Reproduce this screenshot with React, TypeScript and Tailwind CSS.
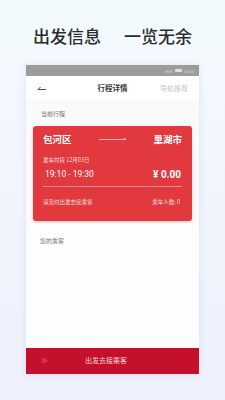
import { ChevronsRight } from "lucide-react";

const font = { fontFamily: '"Noto Sans CJK SC", "Noto Sans", sans-serif' };

export default function App() {
    return (
        <div
            className="w-[225px] h-[400px] bg-gradient-to-b from-[#f3fafd] to-[#eef0fc] flex flex-col items-center overflow-hidden"
            style={font}
        >
            {/* Headline */}
            <div className="mt-[24px] h-[24px] flex items-center text-[17px] font-medium text-[#2b2b2b]">
                出发信息<span className="w-[23px]" />一览无余
            </div>

            {/* Phone screen */}
            <div className="mt-[17px] w-[173px] flex flex-col bg-white shadow-[0_0_6px_rgba(180,190,220,0.35)]">
                {/* Status bar */}
                <div className="h-[11px] bg-[#9c9c9c] flex items-center justify-end pr-[5px] gap-[2px] text-[4px] text-[#d8d8d8]">
                    <span>96%</span>
                    <span className="w-[7px] h-[3px] bg-[#e0e0e0] rounded-[1px]" />
                    <span>18:00</span>
                </div>

                {/* Nav bar */}
                <div className="h-[24px] bg-white flex items-center px-[11px]">
                    <div className="w-[30px]">
                        <svg width="10" height="6" viewBox="0 0 10 6">
                            <path d="M1 4.5h8M1 4.5l2.5-2.5" stroke="#333" strokeWidth="0.9" fill="none" />
                        </svg>
                    </div>
                    <div className="flex-1 text-center text-[7.5px] font-bold text-[#333]">行程详情</div>
                    <div className="w-[30px] text-right text-[7px] text-[#c8c8c8]">导航推荐</div>
                </div>

                {/* Current trip */}
                <div className="bg-[#fafafb] px-[7px] pb-[2px]">
                    <div className="h-[26px] flex items-center pl-[8px] text-[6px] text-[#777]">当前行程</div>
                    <div className="rounded-[3px] bg-[#e2393f] text-white px-[10px] pt-[7px] pb-[14px] shadow-[0_2px_3px_rgba(240,120,130,0.35)]">
                        <div className="flex items-center justify-between h-[12px]">
                            <span className="text-[9.5px] font-bold">包河区</span>
                            <svg width="28" height="4" viewBox="0 0 28 4">
                                <path d="M0 2.5h27M27 2.5l-2-1.5" stroke="#fff" strokeWidth="0.6" fill="none" />
                            </svg>
                            <span className="text-[9.5px] font-bold">巢湖市</span>
                        </div>
                        <div className="mt-[11px] text-[5.5px] text-[#fbdede]">发车时段 12月03日</div>
                        <div className="flex items-center justify-between mt-[4px] h-[12px]">
                            <span className="pl-[2px] text-[8.5px] text-white" style={{ fontFamily: "Roboto, sans-serif" }}>19:10 - 19:30</span>
                            <span className="text-[10px] font-bold text-white pr-[1px]" style={{ fontFamily: "Roboto, sans-serif" }}>¥ 0.00</span>
                        </div>
                        <div className="mt-[6px] h-[1px] bg-[#ef8d90]" />
                        <div className="mt-[11px] flex items-center justify-between text-[5.5px] text-[#fbdede]">
                            <span>请及时出发去接乘客</span>
                            <span className="pr-[2px]">乘车人数: 0</span>
                        </div>
                    </div>
                </div>

                {/* Passengers */}
                <div className="h-[125px] bg-[#fdfdfd] px-[14px] pt-[13px]">
                    <div className="text-[6px] text-[#777]">您的乘客</div>
                </div>

                {/* Button */}
                <div className="h-[26px] bg-[#c4102b] flex items-center px-[14px] text-white">
                    <ChevronsRight size={9} strokeWidth={1.5} className="text-[#f4c5cc]" />
                    <span className="flex-1 text-center text-[7px] text-[#f6d4d9] pr-[22px]">出发去接乘客</span>
                </div>
            </div>
        </div>
    );
}
